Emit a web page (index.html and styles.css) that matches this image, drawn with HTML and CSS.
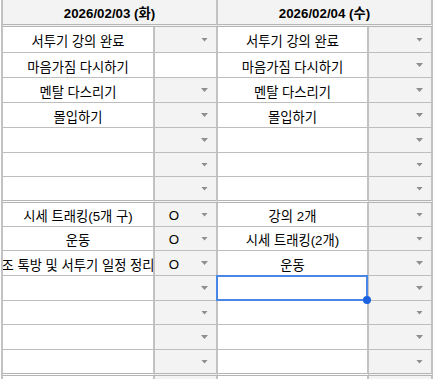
FILE: index.html
```html
<!DOCTYPE html>
<html lang="ko">
<head>
<meta charset="utf-8">
<title>Sheet</title>
<link rel="stylesheet" href="styles.css">
</head>
<body>
<div class="sheet">
  <div class="hd">2026/02/03 (화)</div>
  <div class="hd">2026/02/04 (수)</div>

  <div class="c t r1">서투기 강의 완료</div><div class="c dd r1"><span class="v"></span><i class="ar"></i></div>
  <div class="c t r1">서투기 강의 완료</div><div class="c dd r1"><span class="v"></span><i class="ar"></i></div>

  <div class="c t">마음가짐 다시하기</div><div class="c blank"></div>
  <div class="c t">마음가짐 다시하기</div><div class="c dd"><span class="v"></span><i class="ar"></i></div>

  <div class="c t">멘탈 다스리기</div><div class="c dd"><span class="v"></span><i class="ar"></i></div>
  <div class="c t">멘탈 다스리기</div><div class="c dd"><span class="v"></span><i class="ar"></i></div>

  <div class="c t">몰입하기</div><div class="c dd"><span class="v"></span><i class="ar"></i></div>
  <div class="c t">몰입하기</div><div class="c dd"><span class="v"></span><i class="ar"></i></div>

  <div class="c t"></div><div class="c dd"><span class="v"></span><i class="ar"></i></div>
  <div class="c t"></div><div class="c dd"><span class="v"></span><i class="ar"></i></div>

  <div class="c t"></div><div class="c dd"><span class="v"></span><i class="ar"></i></div>
  <div class="c t"></div><div class="c dd"><span class="v"></span><i class="ar"></i></div>

  <div class="c t dbl"></div><div class="c dd dbl"><span class="v"></span><i class="ar"></i></div>
  <div class="c t dbl"></div><div class="c dd dbl"><span class="v"></span><i class="ar"></i></div>

  <div class="c t">시세 트래킹(5개 구)</div><div class="c dd"><span class="v">O</span><i class="ar"></i></div>
  <div class="c t">강의 2개</div><div class="c dd"><span class="v"></span><i class="ar"></i></div>

  <div class="c t">운동</div><div class="c dd"><span class="v">O</span><i class="ar"></i></div>
  <div class="c t">시세 트래킹(2개)</div><div class="c dd"><span class="v"></span><i class="ar"></i></div>

  <div class="c t"><span class="clip">조 톡방 및 서투기 일정 정리</span></div><div class="c dd"><span class="v">O</span><i class="ar"></i></div>
  <div class="c t">운동</div><div class="c dd"><span class="v"></span><i class="ar"></i></div>

  <div class="c t"></div><div class="c dd"><span class="v"></span><i class="ar"></i></div>
  <div class="c t sel"><span class="box"><span class="handle"></span></span></div><div class="c dd"><span class="v"></span><i class="ar"></i></div>

  <div class="c t"></div><div class="c dd"><span class="v"></span><i class="ar"></i></div>
  <div class="c t"></div><div class="c dd"><span class="v"></span><i class="ar"></i></div>

  <div class="c t"></div><div class="c dd"><span class="v"></span><i class="ar"></i></div>
  <div class="c t"></div><div class="c dd"><span class="v"></span><i class="ar"></i></div>

  <div class="c t dbl"></div><div class="c dd dbl"><span class="v"></span><i class="ar"></i></div>
  <div class="c t dbl"></div><div class="c dd dbl"><span class="v"></span><i class="ar"></i></div>

  <div class="c t"></div><div class="c dd"></div>
  <div class="c t"></div><div class="c dd"></div>
</div>
</body>
</html>
```

FILE: styles.css
```css
* { box-sizing: border-box; }

html, body {
  margin: 0;
  padding: 0;
  background: #ffffff;
  overflow: hidden;
}

body {
  width: 433px;
  height: 379px;
  font-family: "Liberation Sans", "Noto Sans CJK KR", sans-serif;
  font-size: 13.3px;
  color: #000000;
}

.sheet {
  margin-left: 1px;
  display: grid;
  grid-template-columns: 152px 63px 151px 64px;
  grid-template-rows: 27px 26px 25px 25px 25px 25px 24px 26px 24px 24px 25px 25px 24px 25px 26px 10px;
  border-left: 2px solid #c2c2c2;
}

.hd {
  grid-column: span 2;
  background: #f3f3f3;
  border-right: 2px solid #c2c2c2;
  border-bottom: 3px double #b5b5b5;
  font-weight: bold;
  display: flex;
  align-items: center;
  justify-content: center;
  padding-top: 1px;
}

.c {
  border-right: 2px solid #c2c2c2;
  border-bottom: 1px solid #bdbdbd;
  display: flex;
  align-items: center;
  white-space: nowrap;
  padding-top: 2px;
  min-width: 0;
}

.c.dbl {
  border-bottom: 3px double #b5b5b5;
}

.t {
  justify-content: center;
  background: #ffffff;
  overflow: hidden;
}

.clip {
  flex: none;
}

.blank {
  background: #ffffff;
}

.dd {
  background: #f3f3f3;
  display: grid;
  grid-template-columns: 1fr 7px;
  column-gap: 8px;
  align-items: center;
  padding-right: 8px;
}

.dd .v {
  text-align: center;
}

.ar {
  display: block;
  width: 7px;
  height: 4px;
  background: #8e8e8e;
  clip-path: polygon(0 0, 100% 0, 50% 100%);
  margin-top: -2px;
}

.sel {
  position: relative;
  overflow: visible;
}

.box {
  position: absolute;
  left: -2px;
  top: -1px;
  width: 152px;
  height: 26px;
  border: 2px solid #4a86e8;
  z-index: 2;
}

.handle {
  position: absolute;
  right: -5px;
  bottom: -5px;
  width: 8px;
  height: 8px;
  border-radius: 50%;
  background: #1a62e0;
}
```
